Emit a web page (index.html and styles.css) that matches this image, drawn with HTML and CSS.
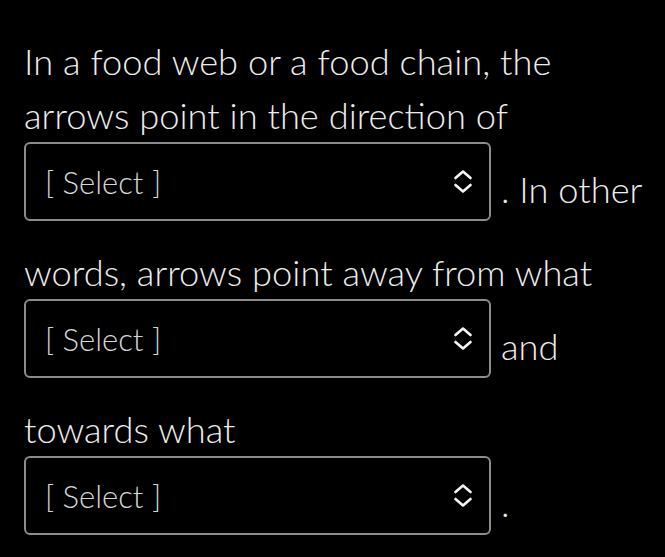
FILE: index.html
```html
<!DOCTYPE html>
<html lang="en">
<head>
<meta charset="utf-8">
<title>Food web question</title>
<link rel="stylesheet" href="styles.css">
</head>
<body>
<div class="question">In a food web or a food chain, the arrows point in the direction of <span class="select"><span class="select-value">[ Select ]</span><svg class="select-arrows" viewBox="0 0 18 23" width="18" height="23" aria-hidden="true"><polyline points="1.5,8 9,1.5 16.5,8"/><polyline points="1.5,15 9,21.5 16.5,15"/></svg></span>. In other words, arrows point away from what <span class="select"><span class="select-value">[ Select ]</span><svg class="select-arrows" viewBox="0 0 18 23" width="18" height="23" aria-hidden="true"><polyline points="1.5,8 9,1.5 16.5,8"/><polyline points="1.5,15 9,21.5 16.5,15"/></svg></span>and towards what <span class="select"><span class="select-value">[ Select ]</span><svg class="select-arrows" viewBox="0 0 18 23" width="18" height="23" aria-hidden="true"><polyline points="1.5,8 9,1.5 16.5,8"/><polyline points="1.5,15 9,21.5 16.5,15"/></svg></span>.</div>
</body>
</html>
```

FILE: styles.css
```css
html, body {
  margin: 0;
  padding: 0;
  background: #000;
}

body {
  width: 665px;
  height: 557px;
  overflow: hidden;
}

.question {
  box-sizing: border-box;
  width: 665px;
  padding: 34px 10px 0 24px;
  font-family: "Lato Light", Lato, "Open Sans", sans-serif;
  font-weight: 300;
  font-size: 36.3px;
  line-height: 54px;
  color: #ececec;
}

.select {
  display: inline-flex;
  align-items: center;
  justify-content: space-between;
  box-sizing: border-box;
  width: 467px;
  height: 79px;
  padding: 0 17px 0 19px;
  border: 2px solid #8c8c8c;
  border-radius: 6px;
  margin: 0 10px 24px 0;
  vertical-align: 9px;
}

.select-value {
  font-size: 31px;
  line-height: 36px;
  color: #d6d6d6;
}

.select-arrows {
  fill: none;
  stroke: #f4f4f4;
  stroke-width: 2.6;
  stroke-linecap: round;
  stroke-linejoin: round;
}
```
